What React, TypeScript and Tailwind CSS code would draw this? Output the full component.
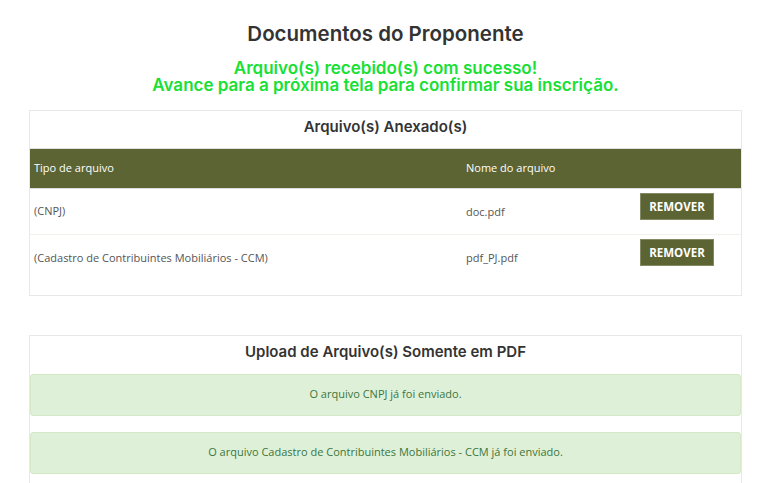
export default function App() {
  const arquivos = [
    { tipo: "(CNPJ)", nome: "doc.pdf" },
    { tipo: "(Cadastro de Contribuintes Mobiliários - CCM)", nome: "pdf_PJ.pdf" },
  ]
  const enviados = ["CNPJ", "Cadastro de Contribuintes Mobiliários - CCM"]

  return (
    <div className="min-h-[483px] bg-white font-['Open_Sans',sans-serif] text-[#555]">
      <div className="ml-[29px] w-[713px] pt-[22px]">
        <h1 className="text-center font-['Inter',sans-serif] text-[20.5px] font-semibold leading-[24px] text-[#333]">
          Documentos do Proponente
        </h1>
        <div className="mt-[14px] text-center font-['Inter',sans-serif] text-[17px] font-semibold leading-[17px] text-[#19e034]">
          <p>Arquivo(s) recebido(s) com sucesso!</p>
          <p>Avance para a próxima tela para confirmar sua inscrição.</p>
        </div>

        <div className="mt-[16px] border border-[#e8e8e8] pb-[14px]">
          <h2 className="pt-[4px] pb-[10px] text-center font-['Inter',sans-serif] text-[15px] font-semibold leading-[23px] text-[#333]">
            Arquivo(s) Anexado(s)
          </h2>
          <table className="w-full text-[11px]">
            <thead>
              <tr className="h-[40px] border-y border-[#dedede] bg-[#5c6433] text-left text-white">
                <th className="w-[432px] px-1 font-normal">Tipo de arquivo</th>
                <th className="w-[174px] px-1 font-normal">Nome do arquivo</th>
                <th className="px-1"></th>
              </tr>
            </thead>
            <tbody>
              {arquivos.map((a, i) => (
                <tr key={a.nome} className={`h-[46px] ${i === 0 ? "border-b border-[#f3f3ee]" : ""}`}>
                  <td className="px-1 align-middle">{a.tipo}</td>
                  <td className="px-1 pt-[1px] align-middle">{a.nome}</td>
                  <td className="px-1 pt-1 align-top">
                    <button className="h-[27px] w-[74px] border border-[#848a63] bg-[#5c6433] text-[11.5px] font-bold text-white">
                      REMOVER
                    </button>
                  </td>
                </tr>
              ))}
            </tbody>
          </table>
        </div>

        <div className="mt-[39px] border border-[#e8e8e8] pb-4">
          <h2 className="py-[4px] text-center font-['Inter',sans-serif] text-[15px] font-semibold leading-[23px] text-[#333]">
            Upload de Arquivo(s) Somente em PDF
          </h2>
          <div className="mt-[7px] flex flex-col gap-[16px]">
            {enviados.map((e) => (
              <div
                key={e}
                className="flex h-[42px] items-center justify-center rounded-[3px] border border-[#d6e9c6] bg-[#dff0d8] text-[11px] text-[#3c763d]"
              >
                O arquivo {e} já foi enviado.
              </div>
            ))}
          </div>
        </div>
      </div>
    </div>
  )
}
